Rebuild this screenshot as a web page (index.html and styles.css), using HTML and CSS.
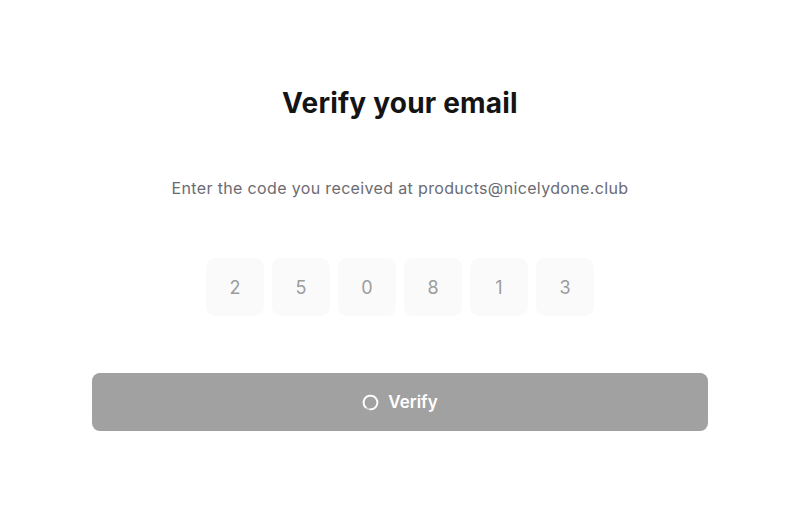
FILE: index.html
```html
<!DOCTYPE html>
<html>
<head>
<meta charset="utf-8">
<link rel="stylesheet" href="styles.css">
</head>
<body>
<main class="card">
  <h1 class="title">Verify your email</h1>
  <p class="subtitle">Enter the code you received at products@nicelydone.club</p>
  <div class="code">
    <div class="digit">2</div>
    <div class="digit">5</div>
    <div class="digit">0</div>
    <div class="digit">8</div>
    <div class="digit">1</div>
    <div class="digit">3</div>
  </div>
  <button class="verify">
    <svg class="spinner" width="17" height="17" viewBox="0 0 16 16">
      <circle cx="8" cy="8" r="6.5" fill="none" stroke="#cfcfcf" stroke-width="1.7"/>
      <path d="M3.4 12.6 A6.5 6.5 0 1 1 8 14.5" fill="none" stroke="#ffffff" stroke-width="1.7" stroke-linecap="round"/>
    </svg>
    <span>Verify</span>
  </button>
</main>
</body>
</html>
```

FILE: styles.css
```css
html, body {
  margin: 0;
  padding: 0;
  background: #ffffff;
}
body {
  font-family: Inter, "Liberation Sans", sans-serif;
}
.card {
  display: flex;
  flex-direction: column;
  align-items: center;
  padding-top: 84px;
}
.title {
  margin: 0;
  font-size: 28px;
  line-height: 38px;
  font-weight: 700;
  color: #141414;
  letter-spacing: 0.2px;
}
.subtitle {
  margin: 57px 0 0 0;
  font-size: 16px;
  line-height: 18px;
  color: #6b6b72;
  letter-spacing: 0.35px;
}
.code {
  display: flex;
  gap: 8px;
  margin-top: 61px;
}
.digit {
  width: 58px;
  height: 58px;
  border-radius: 9px;
  background: #fafafa;
  display: flex;
  align-items: center;
  justify-content: center;
  font-size: 18px;
  color: #9c9c9c;
}
.verify {
  margin-top: 57px;
  width: 616px;
  height: 58px;
  border: none;
  border-radius: 8px;
  background: #a1a1a1;
  color: #ffffff;
  font-family: Inter, "Liberation Sans", sans-serif;
  font-size: 17px;
  font-weight: 600;
  display: flex;
  align-items: center;
  justify-content: center;
  gap: 9px;
}
.spinner {
  display: block;
}
```
